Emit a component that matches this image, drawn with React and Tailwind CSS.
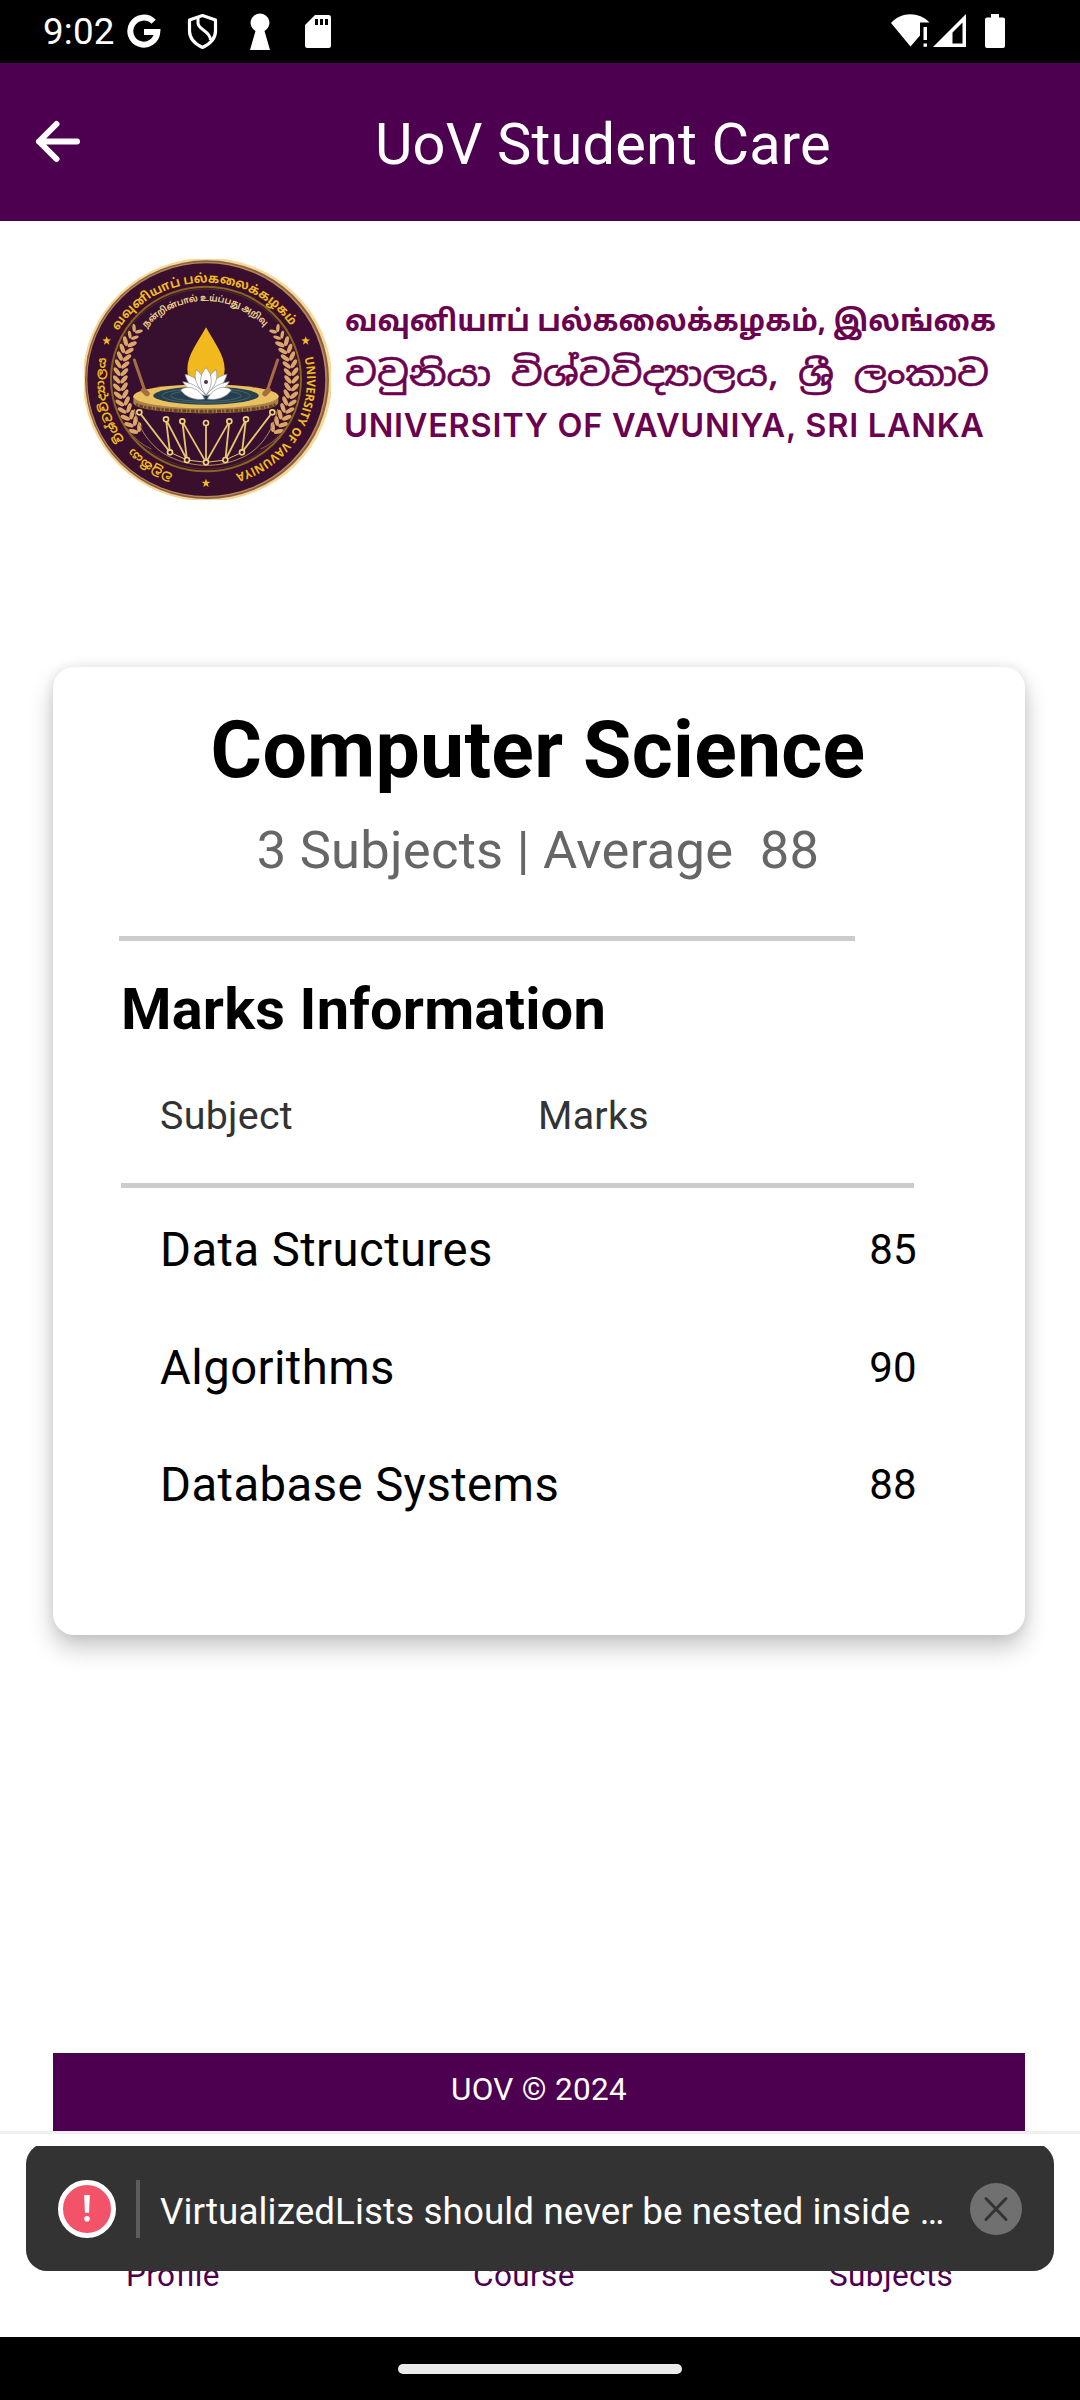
import React from "react";

const CX = 408;
const CY = 404;

// Point on an ellipse around the emblem centre; degrees run clockwise from the top.
function polar(rx, ry, deg) {
  const a = (deg * Math.PI) / 180;
  return [CX + rx * Math.sin(a), CY - ry * Math.cos(a)];
}

function arc(rx, ry, from, to) {
  const [x1, y1] = polar(rx, ry, from);
  const [x2, y2] = polar(rx, ry, to);
  return `M${x1} ${y1}A${rx} ${ry} 0 ${to - from > 180 ? 1 : 0} 1 ${x2} ${y2}`;
}

function Laurel({ side }) {
  const leaves = [];
  for (let i = 0; i < 15; i++) {
    const deg = -126 + i * 5.1;
    const [x, y] = polar(257, 256, deg);
    const size = i > 12 ? 0.8 : 1;
    leaves.push(
      <g key={i} transform={`translate(${x} ${y}) rotate(${deg}) scale(${size})`}>
        <ellipse cx="2" cy="-11" rx="15" ry="6.4" transform="rotate(-40 2 -11)" />
        <ellipse cx="2" cy="11" rx="15" ry="6.4" transform="rotate(40 2 11)" />
      </g>
    );
  }
  return (
    <g fill="#dca668" transform={side === "right" ? "translate(816 0) scale(-1 1)" : undefined}>
      {leaves}
    </g>
  );
}

const topNodes = [[208, 502], [288, 523], [337, 529], [408, 534], [478, 529], [528, 523], [607, 502]];
const bottomNodes = [[300, 622], [351, 645], [408, 652], [466, 645], [516, 622]];

function Emblem() {
  return (
    <svg className="h-[265px] w-[270px] shrink-0" viewBox="0 0 810 795">
      <defs>
        <path id="tamil" d={arc(305, 291, -60, 60)} />
        <path id="motto" d={arc(238, 236, -49, 49)} />
        <path id="english" d={arc(303, 296, 77, 164)} />
        <path id="sinhalaA" d={arc(302, 298, 199, 231)} />
        <path id="sinhalaB" d={arc(305, 299, 233, 284)} />
        <clipPath id="seal"><rect x="42" y="42" width="741" height="723" /></clipPath>
      </defs>
      <g clipPath="url(#seal)">
        <ellipse cx="412" cy="404" rx="374" ry="365" fill="#f6d795" />
        <ellipse cx="411" cy="404" rx="366" ry="358" fill="#8a5f45" />
        <ellipse cx="410" cy="404" rx="361" ry="353" fill="#b98a55" />
        <ellipse cx="409" cy="404" rx="357" ry="349" fill="#3a0f2e" />
      </g>
      <ellipse cx="408" cy="402" rx="285" ry="277" fill="#371030" stroke="#8c6420" strokeWidth="6" />
      <ellipse cx="408" cy="402" rx="277" ry="270" fill="none" stroke="#5c3a24" strokeWidth="2" />

      <g fill="#f0bb1e" fontWeight="700">
        <text fontSize="38" fontFamily="'Noto Sans Tamil','Noto Sans',sans-serif">
          <textPath href="#tamil" textLength="612" lengthAdjust="spacingAndGlyphs">வவுனியாப் பல்கலைக்கழகம்</textPath>
        </text>
        <text fontSize="36" fontFamily="'Open Sans',sans-serif">
          <textPath href="#english" textLength="448" lengthAdjust="spacingAndGlyphs">UNIVERSITY OF VAVUNIYA</textPath>
        </text>
        <text fontSize="35" fontFamily="'Noto Sans Sinhala','Noto Sans',sans-serif">
          <textPath href="#sinhalaA" textLength="146" lengthAdjust="spacingAndGlyphs">වවුනියා</textPath>
        </text>
        <text fontSize="35" fontFamily="'Noto Sans Sinhala','Noto Sans',sans-serif">
          <textPath href="#sinhalaB" textLength="258" lengthAdjust="spacingAndGlyphs">විශ්වවිද්‍යාලය</textPath>
        </text>
      </g>
      <text fill="#ecd08c" fontSize="27" fontWeight="700" fontFamily="'Noto Sans Tamil','Noto Sans',sans-serif">
        <textPath href="#motto" textLength="400" lengthAdjust="spacingAndGlyphs">நன்றின்பால் உய்ப்பது அறிவு</textPath>
      </text>

      {[[110, 287], [707, 287], [408, 714]].map(([x, y]) => (
        <path
          key={x}
          transform={`translate(${x} ${y})`}
          d="M0-13L3.5-4L13-3.5L5.5 2.5L8 12L0 6.5L-8 12L-5.5 2.5L-13-3.5L-3.5-4Z"
          fill="#f0bb1e"
        />
      ))}

      <Laurel side="left" />
      <Laurel side="right" />

      <g fill="none" stroke="#b98a4a" strokeWidth="3">
        <path d="M193 492C205 560 255 620 310 640C370 668 450 668 510 640C565 620 610 560 623 492" />
        <path d="M172 550C190 580 215 598 244 612M644 550C626 580 601 598 572 612" stroke="#8d5f3c" />
        <path d="M300 622L351 645L408 652L466 645L516 622" stroke="#e3c06b" />
      </g>
      <path
        d="M208 502L300 622L288 523L351 645L337 529L408 652V534M408 652L478 529L466 645L528 523L516 622L607 502"
        fill="none"
        stroke="#e6c36c"
        strokeWidth="5.5"
      />
      {[...topNodes, ...bottomNodes].map(([x, y]) => (
        <circle key={`${x}-${y}`} cx={x} cy={y} r="7.5" fill="#3a0f2e" stroke="#efd27c" strokeWidth="5" />
      ))}

      <path d="M190 454V474C205 515 611 515 625 474V454Z" fill="#a98149" />
      <path d="M198 478C240 506 575 506 617 478" fill="none" stroke="#6b4428" strokeWidth="10" strokeDasharray="7 4 12 3" />
      <ellipse cx="408" cy="454" rx="218" ry="36" fill="#e9c160" />
      <ellipse cx="408" cy="452" rx="158" ry="27" fill="#26404f" />
      <ellipse cx="408" cy="452" rx="132" ry="22" fill="none" stroke="#48636c" strokeWidth="3" />
      <ellipse cx="408" cy="452" rx="106" ry="17" fill="none" stroke="#48636c" strokeWidth="3" />
      <path d="M193 345L226 442M623 345L590 442" stroke="#a66c42" strokeWidth="9" strokeLinecap="round" />
      <path d="M221 436L231 446M595 436L585 446" stroke="#a66c42" strokeWidth="16" strokeLinecap="round" />

      <path d="M408 247C385 290 352 330 352 372C352 405 376 430 408 430C440 430 464 405 464 372C464 330 431 290 408 247Z" fill="#f2b91f" />
      <g fill="#fff" stroke="#8b8790" strokeWidth="2">
        <path d="M408 450C370 440 352 415 345 388C375 392 395 415 408 450Z" />
        <path d="M408 450C446 440 464 415 471 388C441 392 421 415 408 450Z" />
        <path d="M408 450C380 425 370 400 378 374C400 388 408 415 408 450Z" />
        <path d="M408 450C436 425 446 400 438 374C416 388 408 415 408 450Z" />
        <path d="M408 450C385 420 388 390 408 368C428 390 431 420 408 450Z" />
        <path d="M408 452C385 420 355 412 338 410C350 432 375 445 408 452Z" />
        <path d="M408 452C431 420 461 412 478 410C466 432 441 445 408 452Z" />
        <path d="M404 462C385 425 350 420 332 435C348 458 375 467 404 462Z" />
        <path d="M412 462C431 425 466 420 484 435C468 458 441 467 412 462Z" />
      </g>
      <circle cx="408" cy="411" r="6" fill="#4a3444" />
    </svg>
  );
}

function Wordmark() {
  return (
    <svg className="h-[170px] w-[670px]" viewBox="0 0 670 170" fill="#6b0250">
      <text x="5" y="41" fontSize="29.5" fontWeight="700" textLength="651" lengthAdjust="spacingAndGlyphs" fontFamily="'Noto Sans Tamil','Noto Sans',sans-serif">
        வவுனியாப் பல்கலைக்கழகம், இலங்கை
      </text>
      <text x="5" y="96" fontSize="34.5" fontWeight="400" stroke="#6b0250" strokeWidth="0.6" textLength="644" lengthAdjust="spacingAndGlyphs" fontFamily="'Noto Sans Sinhala','Noto Sans',sans-serif">
        වවුනියා විශ්වවිද්‍යාලය, ශ්‍රී ලංකාව
      </text>
      <text x="4" y="147" fontSize="32.5" fontWeight="600" textLength="640" lengthAdjust="spacing" fontFamily="Inter,sans-serif">
        UNIVERSITY OF VAVUNIYA, SRI LANKA
      </text>
    </svg>
  );
}

function StatusBar() {
  return (
    <div className="flex h-[63px] items-start bg-black pt-[10px] pl-[43px] text-white">
      <span className="h-[43px] w-[84px] whitespace-nowrap text-[36.75px] leading-[43px] tracking-[0.2px]">9:02</span>
      <svg className="h-[43px] w-[220px]" viewBox="127 10 220 43">
        <path d="M153.6 21.8A13.5 13.5 0 1 0 157.3 32H144" fill="none" stroke="#fff" strokeWidth="6" />
        <path d="M202.5 15.5L215.5 20V31C215.5 38 210 44 202.5 47.5C195 44 189.5 38 189.5 31V20Z" fill="none" stroke="#fff" strokeWidth="3.2" strokeLinejoin="round" />
        <path d="M198 17.5V23C198 30 210.5 31 210.5 40" fill="none" stroke="#fff" strokeWidth="3" />
        <path d="M260 13.5A9.3 9.3 0 0 1 264.5 31L270 50H250L255.5 31A9.3 9.3 0 0 1 260 13.5Z" fill="#fff" />
        <path fillRule="evenodd" d="M315 15H328.500a2.500 2.500 0 0 1 2.500 2.500V45.500a2.500 2.500 0 0 1-2.500 2.500H307.500a2.500 2.500 0 0 1-2.500-2.500V25ZM315 19v6h3v-6ZM320 19v6h3v-6ZM325 19v6h3v-6Z" fill="#fff" />
      </svg>
      <svg className="mr-[70px] ml-auto h-[43px] w-[120px]" viewBox="890 10 120 43" fill="#fff">
        <path d="M891 23C901 11.500 919 11.500 929.500 22.500H920V35.500L910.500 46.500Z" />
        <path d="M923.500 27h3.500v13h-3.500ZM923.500 43.500h3.500v3.200h-3.500Z" />
        <path fillRule="evenodd" d="M933 47L966 14V47ZM952.500 32.500V43.500H962.500V22.500Z" />
        <path d="M991 14h8v3.500h4a2 2 0 0 1 2 2V46a2 2 0 0 1-2 2H987a2 2 0 0 1-2-2V19.500a2 2 0 0 1 2-2h4Z" />
      </svg>
    </div>
  );
}

const marks = [
  { subject: "Data Structures", mark: 85 },
  { subject: "Algorithms", mark: 90 },
  { subject: "Database Systems", mark: 88 },
];

export default function App() {
  return (
    <div className="relative flex h-[2400px] w-[1080px] flex-col overflow-hidden bg-white font-[Roboto,sans-serif] text-black">
      <StatusBar />
      <header className="flex h-[158px] items-center bg-[#4c004f] pl-[35px] text-white">
        <svg className="h-[46px] w-[46px]" viewBox="0 0 46 46" fill="none" stroke="#fff" strokeWidth="6" strokeLinecap="round" strokeLinejoin="round">
          <path d="M42 22.500H4M21.500 5L4 22.500L21.500 40" />
        </svg>
        <h1 className="mt-[3px] ml-[294px] whitespace-nowrap text-[57.75px] leading-[68px] tracking-[0.14px]">UoV Student Care</h1>
      </header>

      <main className="flex h-[1910px] flex-col pl-[53px]">
        <div className="flex h-[289px] items-start pt-[24px] pl-[17px]">
          <Emblem />
          <div className="pt-[45px]">
            <Wordmark />
          </div>
        </div>

        <section className="mt-[157px] h-[968px] w-[972px] rounded-[21px] bg-white pt-[37px] shadow-[0_13px_24px_rgba(0,0,0,0.22),0_0_12px_rgba(0,0,0,0.09)]">
          <h2 className="pr-[2px] text-center text-[78.75px] leading-[92px] font-bold tracking-[0.25px] whitespace-nowrap">Computer Science</h2>
          <p className="mt-[23px] pr-[2px] text-center text-[52.5px] leading-[62px] tracking-[0.25px] whitespace-pre text-[#666]">{"3 Subjects | Average  88"}</p>
          <div className="mt-[55px] ml-[66px] h-[5px] w-[736px] bg-[#ccc]" />
          <h3 className="mt-[34px] ml-[68px] text-[57.75px] leading-[68px] font-bold tracking-[0.18px] whitespace-nowrap">Marks Information</h3>
          <div className="mt-[49px] flex pl-[107px] text-[39.375px] leading-[48px] tracking-[0.3px] text-[#333]">
            <span className="w-[378px]">Subject</span>
            <span>Marks</span>
          </div>
          <div className="mt-[43px] ml-[68px] h-[5px] w-[793px] bg-[#ccc]" />
          <div className="mt-[3.3px] ml-[107px] w-[757px]">
            {marks.map((row) => (
              <div key={row.subject} className="flex h-[117.6px] items-center justify-between">
                <span className="text-[47.25px] leading-[56px] tracking-[0.43px]">{row.subject}</span>
                <span className="text-[42px] leading-[50px] tracking-[0.3px]">{row.mark}</span>
              </div>
            ))}
          </div>
        </section>

        <footer className="mt-auto h-[78px] w-[972px] bg-[#4c004f] pt-[18px] text-center text-[31.5px] leading-[38px] tracking-[0.3px] text-white">
          UOV © 2024
        </footer>
      </main>

      <nav className="flex h-[206px] items-start border-t-[3px] border-[#efefef] pt-[123px] text-[31.5px] leading-[38px] tracking-[0.4px] text-[#4c004f]">
        <span className="ml-[126px] w-[347px]">Profile</span>
        <span className="w-[356px]">Course</span>
        <span>Subjects</span>
      </nav>

      <div className="flex h-[63px] justify-center bg-black pt-[27px]">
        <div className="h-[10px] w-[284px] rounded-full bg-[#ebebeb]" />
      </div>

      <div className="absolute top-[2146px] left-[26px] h-[125px] w-[1028px] overflow-hidden">
        <div className="-mt-[3px] flex h-[128px] items-center rounded-[21px] bg-[#333] pt-[4px] pl-[32px] text-white">
          <div className="flex h-[58px] w-[58px] items-center justify-center rounded-full border-[5px] border-white bg-[#f35369]">
            <svg className="h-[28px] w-[8px]" viewBox="0 0 8 30" fill="#fff">
              <path d="M1 0H7L6.200 19H1.800Z" />
              <circle cx="4" cy="25.500" r="3" />
            </svg>
          </div>
          <div className="ml-[20px] h-[58px] w-[4px] bg-[#5c5c5c]" />
          <p className="mt-[5px] ml-[20px] w-[810px] text-[36.75px] leading-[44px] tracking-[0.1px] whitespace-nowrap">
            VirtualizedLists should never be nested inside …
          </p>
          <div className="flex h-[52px] w-[52px] items-center justify-center rounded-full bg-[#707070]">
            <svg className="h-[26px] w-[26px]" viewBox="0 0 26 26" fill="none" stroke="#333" strokeWidth="3" strokeLinecap="round">
              <path d="M3 2.500L23 23.500M23 2.500L3 23.500" />
            </svg>
          </div>
        </div>
      </div>
    </div>
  );
}
